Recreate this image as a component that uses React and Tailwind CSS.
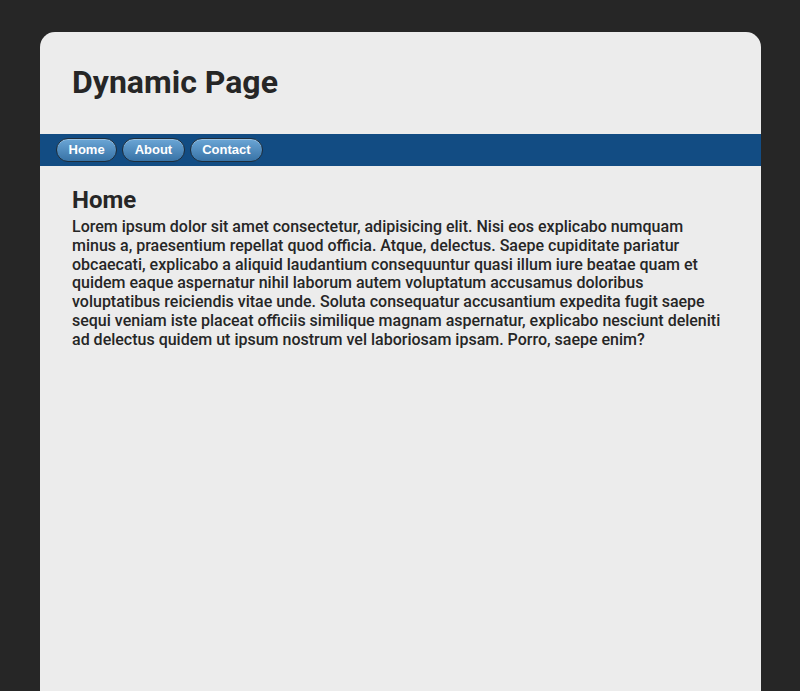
export default function App() {
  const links = ['Home', 'About', 'Contact'];

  return (
    <div className="min-h-[691px] bg-[#262626] pt-8" style={{ fontFamily: 'Roboto, sans-serif' }}>
      <div className="ml-10 w-[721px] min-h-[659px] rounded-t-[15px] bg-[#ececec] text-[#262626]">
        <header className="h-[102px] px-8 flex items-center">
          <h1 className="text-[32px] font-bold pb-[3px]">Dynamic Page</h1>
        </header>

        <nav className="h-8 bg-[#124c83] flex items-center gap-[5px] px-4">
          {links.map((l) => (
            <button
              key={l}
              className="h-6 px-[11.5px] rounded-full border border-[#1e2d3b] bg-gradient-to-b from-[#6ba6d6] to-[#3873a6] text-white text-[13px] font-bold shadow-[inset_0_1px_0_rgba(255,255,255,0.3)]"
              style={{ fontFamily: '"Liberation Sans", Arial, sans-serif' }}
            >
              {l}
            </button>
          ))}
        </nav>

        <main className="px-8 pt-[19px]">
          <h2 className="text-[24px] font-bold leading-[30px]">Home</h2>
          <p className="mt-[3px] text-[16px] font-medium leading-[18.75px]">
            Lorem ipsum dolor sit amet consectetur, adipisicing elit. Nisi eos explicabo numquam minus a, praesentium
            repellat quod officia. Atque, delectus. Saepe cupiditate pariatur obcaecati, explicabo a aliquid laudantium
            consequuntur quasi illum iure beatae quam et quidem eaque aspernatur nihil laborum autem voluptatum accusamus
            doloribus voluptatibus reiciendis vitae unde. Soluta consequatur accusantium expedita fugit saepe sequi veniam
            iste placeat officiis similique magnam aspernatur, explicabo nesciunt deleniti ad delectus quidem ut ipsum
            nostrum vel laboriosam ipsam. Porro, saepe enim?
          </p>
        </main>
      </div>
    </div>
  );
}
